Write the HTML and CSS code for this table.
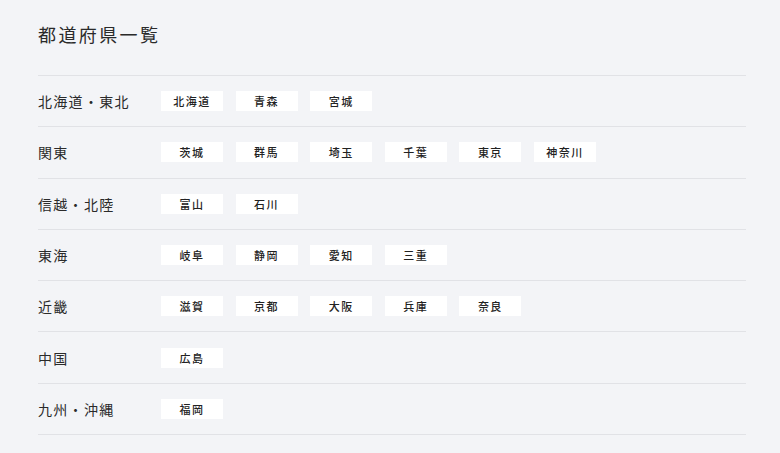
FILE: index.html
```html
<!DOCTYPE html>
<html lang="ja">
<head>
<meta charset="utf-8">
<link rel="stylesheet" href="styles.css">
</head>
<body>
<main class="page">
  <h1 class="title">都道府県一覧</h1>
  <div class="list">
    <div class="row"><div class="label">北海道・東北</div><div class="tags"><span class="tag">北海道</span><span class="tag">青森</span><span class="tag">宮城</span></div></div>
    <div class="row"><div class="label">関東</div><div class="tags"><span class="tag">茨城</span><span class="tag">群馬</span><span class="tag">埼玉</span><span class="tag">千葉</span><span class="tag">東京</span><span class="tag">神奈川</span></div></div>
    <div class="row"><div class="label">信越・北陸</div><div class="tags"><span class="tag">富山</span><span class="tag">石川</span></div></div>
    <div class="row"><div class="label">東海</div><div class="tags"><span class="tag">岐阜</span><span class="tag">静岡</span><span class="tag">愛知</span><span class="tag">三重</span></div></div>
    <div class="row"><div class="label">近畿</div><div class="tags"><span class="tag">滋賀</span><span class="tag">京都</span><span class="tag">大阪</span><span class="tag">兵庫</span><span class="tag">奈良</span></div></div>
    <div class="row"><div class="label">中国</div><div class="tags"><span class="tag">広島</span></div></div>
    <div class="row"><div class="label">九州・沖縄</div><div class="tags"><span class="tag">福岡</span></div></div>
  </div>
</main>
</body>
</html>
```
FILE: styles.css
```css
html, body {
  margin: 0;
  padding: 0;
  background: #f3f4f7;
}
body {
  font-family: "Noto Sans CJK JP", "Noto Sans", sans-serif;
  color: #2a2a2a;
}
.page {
  width: 708px;
  padding: 21px 0 0 38px;
}
.title {
  margin: 0;
  font-size: 18px;
  font-weight: 400;
  letter-spacing: 2.4px;
  line-height: 26px;
  height: 54px;
}
.list {
  border-top: 1px solid #e1e2e6;
}
.row {
  display: flex;
  align-items: center;
  height: 50.3px;
  border-bottom: 1px solid #e1e2e6;
}
.label {
  width: 123px;
  flex: none;
  font-size: 14px;
  letter-spacing: 1.3px;
  color: #2a2a2a;
}
.tags {
  display: flex;
  gap: 12.6px;
}
.tag {
  width: 62px;
  height: 20px;
  background: #ffffff;
  display: flex;
  align-items: center;
  justify-content: center;
  font-size: 11px;
  font-weight: 500;
  letter-spacing: 1.5px;
  color: #222;
}
```
